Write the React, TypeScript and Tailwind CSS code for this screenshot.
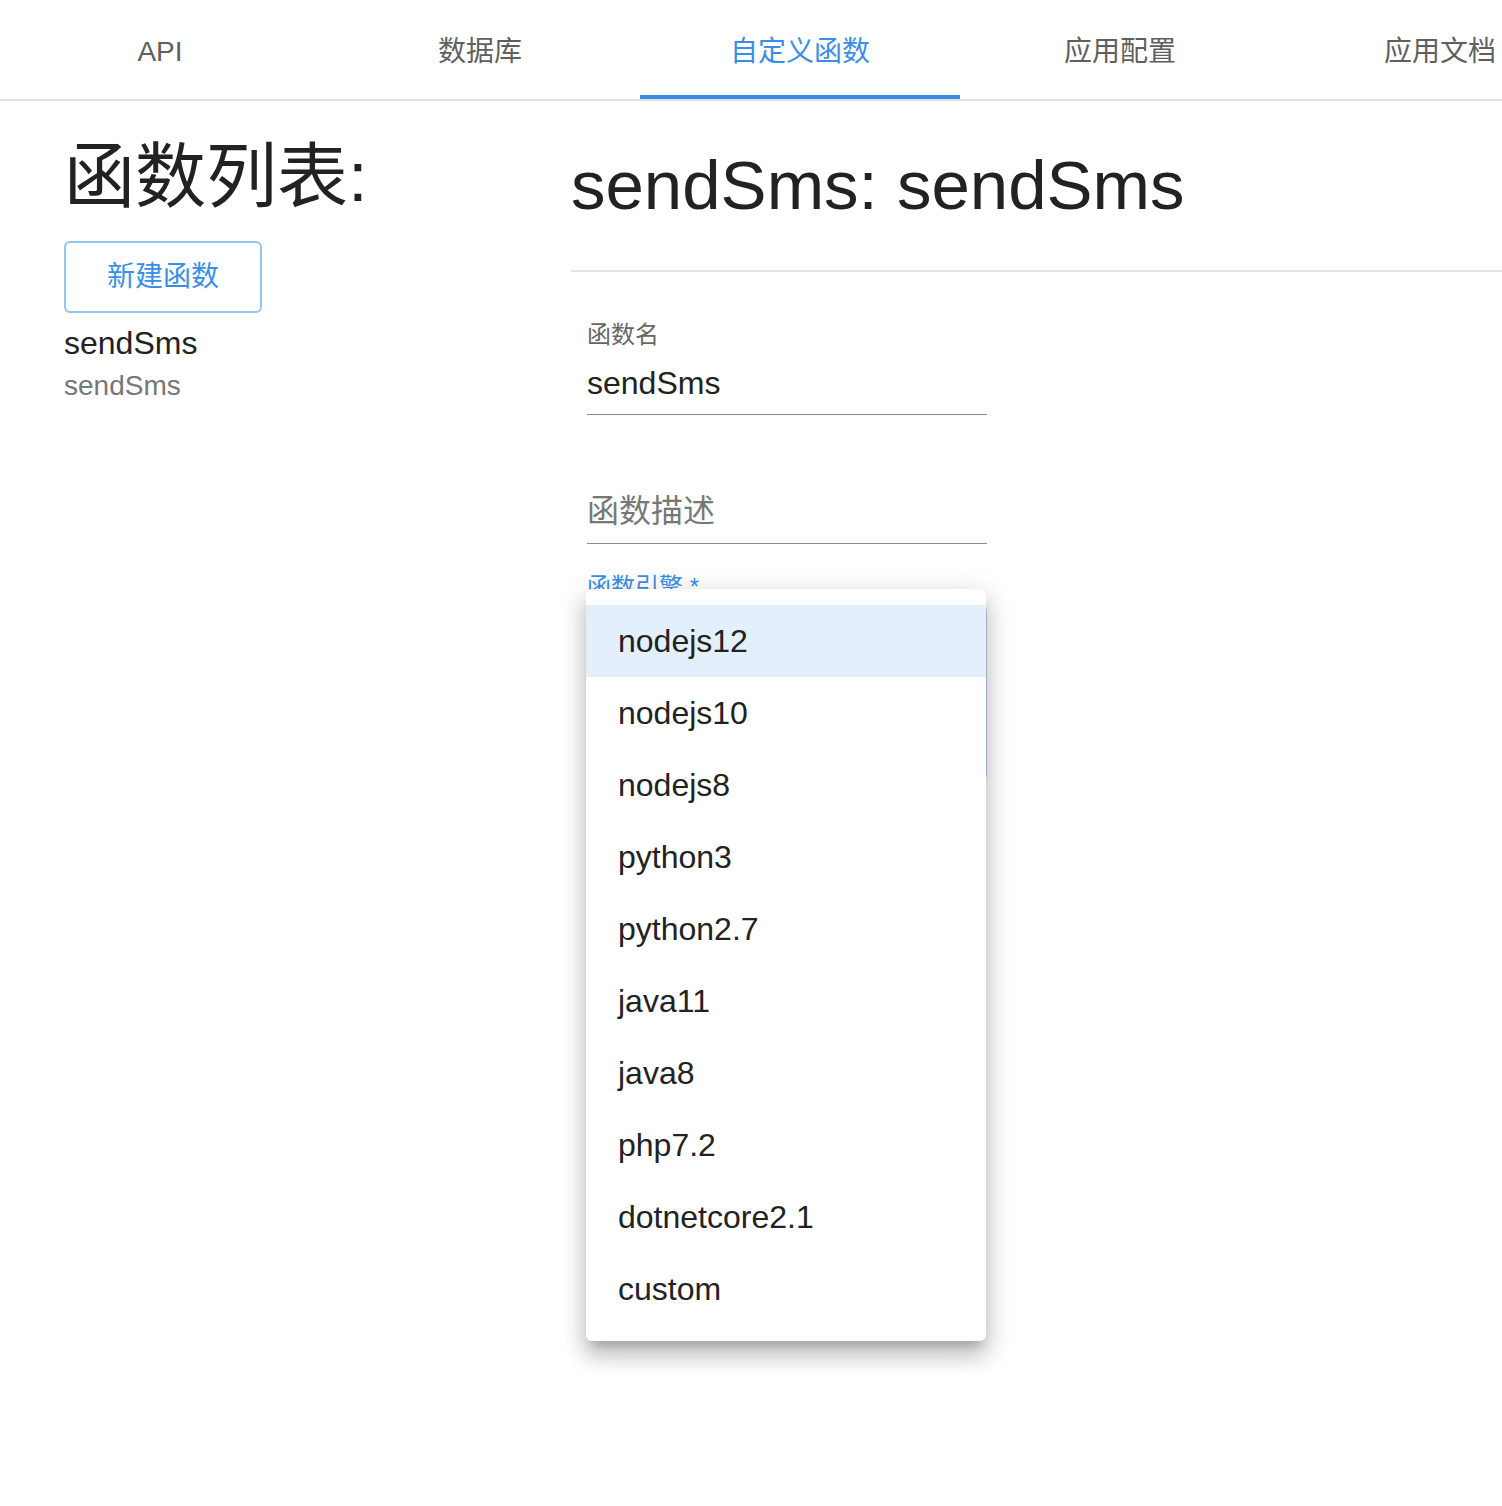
import React from 'react';

const tabs = ['API', '数据库', '自定义函数', '应用配置', '应用文档'];
const runtimes = [
  'nodejs12',
  'nodejs10',
  'nodejs8',
  'python3',
  'python2.7',
  'java11',
  'java8',
  'php7.2',
  'dotnetcore2.1',
  'custom',
];

const font = "font-['Liberation_Sans','Noto_Sans_CJK_SC',sans-serif]";

const App: React.FC = () => {
  return (
    <div className={`relative min-h-[1506px] w-full overflow-hidden bg-white ${font}`}>
      {/* tab bar */}
      <div className="flex h-[101px] overflow-hidden border-b-2 border-[#e0e0e0]">
        {tabs.map((t, i) => (
          <div
            key={t}
            className={`relative flex h-[99px] w-[320px] shrink-0 items-center justify-center pt-[4px] text-[28px] ${
              i === 2 ? 'text-[#3a8ee6]' : 'text-[#5f5f5f]'
            }`}
          >
            {t}
            {i === 2 && <div className="absolute bottom-0 left-0 h-[4px] w-full bg-[#3490de]" />}
          </div>
        ))}
      </div>

      <div className="flex">
        {/* function list */}
        <div className="w-[571px] shrink-0 pl-[64px]">
          <h1 className="mt-[40px] h-[72px] text-[71px] leading-[72px] font-normal text-[#222]">函数列表:</h1>
          <button className="mt-[28px] flex h-[72px] w-[198px] items-center justify-center rounded-[6px] border-2 border-[#93c3ef] text-[28px] text-[#3a8ee6]">
            新建函数
          </button>
          <div className="mt-[10px] text-[32px] leading-[40px] text-[#222]">sendSms</div>
          <div className="mt-[5px] text-[28px] leading-[36px] text-[#777]">sendSms</div>
        </div>

        {/* function detail */}
        <div className="flex-1">
          <h2 className="mt-[45px] text-[69px] leading-[80px] font-normal text-[#222]">sendSms: sendSms</h2>
          <div className="mt-[44px] h-[2px] bg-[#e6e6e6]" />

          <div className="w-[432px] px-4">
            <div className="mt-[47px] text-[24px] leading-[32px] text-[#666]">函数名</div>
            <div className="mt-[12px] border-b-[1.5px] border-[#8a8a8a] pb-[11px] text-[32px] leading-[40px] text-[#222]">
              sendSms
            </div>

            <div className="mt-[76px] border-b-[1.5px] border-[#8a8a8a] pb-[12px] text-[32px] leading-[40px] text-[#777]">
              函数描述
            </div>

            <div className="mt-[27px] text-[24px] leading-[32px] text-[#3a8ee6]">函数引擎 *</div>
            <div className="mt-[2px] h-[176px] rounded-[6px] border-2 border-[#b9d7f4]" />
          </div>
        </div>
      </div>

      {/* runtime dropdown */}
      <div className="absolute left-[586px] top-[589px] w-[400px] rounded-[6px] bg-white py-4 shadow-[0_10px_10px_-6px_rgba(0,0,0,0.2),0_16px_20px_2px_rgba(0,0,0,0.14),0_6px_28px_4px_rgba(0,0,0,0.12)]">
        {runtimes.map((r, i) => (
          <div
            key={r}
            className={`flex h-[72px] items-center px-8 text-[32px] text-[#222] ${i === 0 ? 'bg-[#e3f0fc]' : ''}`}
          >
            {r}
          </div>
        ))}
      </div>
    </div>
  );
};

export default App;
